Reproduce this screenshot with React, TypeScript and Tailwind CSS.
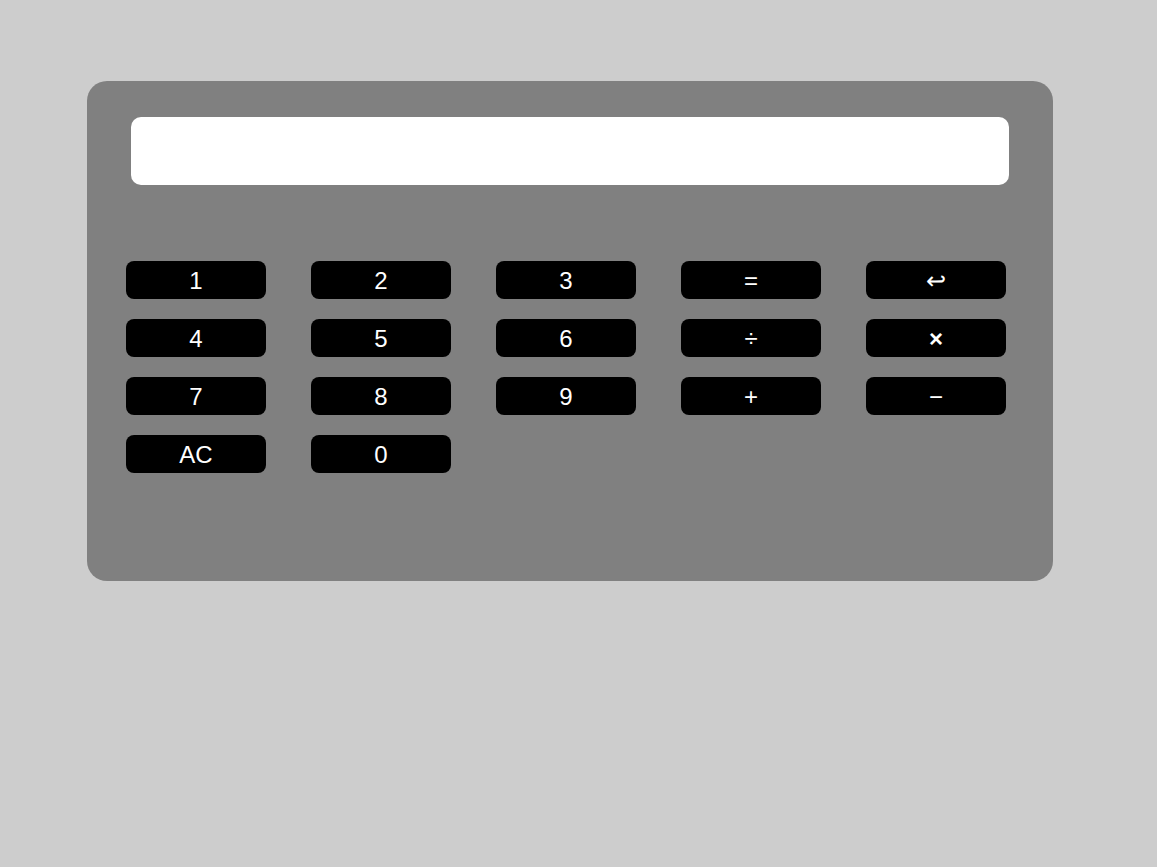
const KEYS = [
  "1", "2", "3", "=", "↩",
  "4", "5", "6", "÷", "×",
  "7", "8", "9", "+", "−",
  "AC", "0",
];

export default function App() {
  return (
    <div className="min-h-[867px] w-full bg-[#cdcdcd] pt-[81px] pl-[87px] font-['Liberation_Sans',Arial,sans-serif]">
      <div className="flex h-[500px] w-[966px] flex-col rounded-[20px] bg-[#808080] px-[44px] pt-[36px]">
        <div className="h-[68px] w-full rounded-[10px] bg-white" />
        <div className="-ml-[5px] mt-[76px] grid grid-cols-[repeat(5,140px)] gap-x-[45px] gap-y-[20px]">
          {KEYS.map((k) => (
            <button
              key={k}
              className={
                k === "×"
                  ? "flex h-[38px] w-[140px] items-center justify-center rounded-[8px] bg-black pt-[2px] text-[24px] font-bold leading-none text-white"
                  : "flex h-[38px] w-[140px] items-center justify-center rounded-[8px] bg-black pt-[2px] text-[24px] leading-none text-white"
              }
            >
              {k}
            </button>
          ))}
        </div>
      </div>
    </div>
  );
}
